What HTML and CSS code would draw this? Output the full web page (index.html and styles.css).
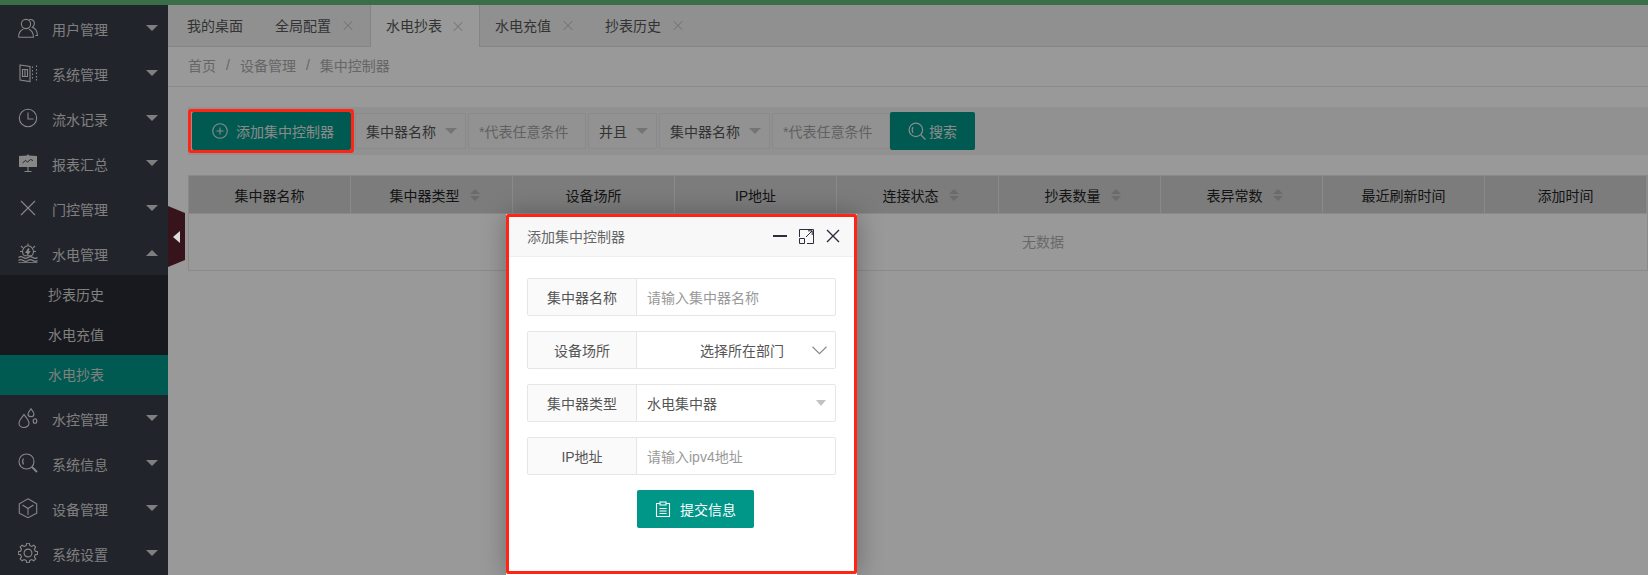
FILE: index.html
```html
<!DOCTYPE html>
<html lang="zh-CN">
<head>
<meta charset="utf-8">
<title>集中控制器</title>
<link rel="stylesheet" href="styles.css">
</head>
<body>
<div class="topline"></div>
<div class="app">
  <aside class="side">
    <a class="item"><svg class="ico" viewBox="0 0 20 20"><circle cx="8" cy="6" r="4.6"/><path d="M.6 19.3c0-5 2.6-7.2 4.6-8M10.800 11.300c2 .8 4.600 3 4.600 8H.6"/><path d="M11 1.800c3-1.200 5.700 1 5.400 4-.1 1.400-1 2.700-2 3.400 2.600 1 5 3.600 5 8.300h-2"/></svg><span class="lbl">用户管理</span><i class="arr"></i></a>
    <a class="item"><svg class="ico" viewBox="0 0 20 20"><path d="M2 2l10 1.500v15L2 17z"/><path d="M4.500 6.500h5v7h-5zM7 6.500v7"/><path d="M14.500 3.500v1.500M14.500 7v1.500M14.500 10.500V12M14.500 14v1.500M18.500 2.500V4M18.500 6v1.500M18.500 9.500V11M18.500 13v1.500M18.500 16v1.500"/></svg><span class="lbl">系统管理</span><i class="arr"></i></a>
    <a class="item"><svg class="ico" viewBox="0 0 20 20"><circle cx="10" cy="10" r="8.700"/><path d="M10 4.500V11H15.500"/></svg><span class="lbl">流水记录</span><i class="arr"></i></a>
    <a class="item"><svg class="ico" viewBox="0 0 20 20"><path class="solid" d="M1 3l8-.6L10 1l1 1.400L19 3v11H1z"/><path class="cut" d="M4.500 10l3-2.500 2 1.500 3-2.500 2.500 1"/><path d="M10 14v4.500M6.500 18.500h7"/></svg><span class="lbl">报表汇总</span><i class="arr"></i></a>
    <a class="item"><svg class="ico" viewBox="0 0 20 20"><path d="M3 3l14 14M17 3L3 17"/></svg><span class="lbl">门控管理</span><i class="arr"></i></a>
    <a class="item"><svg class="ico" viewBox="0 0 20 20"><path d="M4.500 8.500c0-3 2.500-5.700 5.500-5.700s5.500 2.700 5.500 5.700c0 1.700-.7 3.200-1.800 4.200H6.300c-1.100-1-1.800-2.500-1.800-4.200z"/><path d="M10 .5v2.300M3 3l1.800 1.800M17 3l-1.800 1.800M2 8.500h2.500M15.500 8.500H18"/><path class="thick" d="M11 5.500L8.700 9H11l-1.700 2.500"/><path d="M.5 14.500c1.600-1.200 3-1.200 4.700 0s3.100 1.200 4.800 0 3.100-1.200 4.800 0 3.100 1.200 4.700 0M.5 17.500c1.600-1.200 3-1.200 4.700 0s3.100 1.200 4.800 0 3.100-1.200 4.800 0 3.100 1.200 4.700 0M.5 19.700h19"/></svg><span class="lbl">水电管理</span><i class="arr up"></i></a>
    <div class="sub">
      <a class="subitem">抄表历史</a>
      <a class="subitem">水电充值</a>
      <a class="subitem on">水电抄表</a>
    </div>
    <a class="item"><svg class="ico" viewBox="0 0 20 20"><path d="M6 6.500c-2.200 3.300-5 5.700-5 8.700 0 2.500 2.200 4.300 5 4.300s5-1.800 5-4.300c0-3-2.800-5.400-5-8.700z"/><path d="M13 .8c-1.300 2.100-3 3.500-3 5.300 0 1.500 1.300 2.700 3 2.700s3-1.200 3-2.700c0-1.800-1.700-3.200-3-5.300z"/><ellipse cx="17" cy="13" rx="1.800" ry="2.300"/></svg><span class="lbl">水控管理</span><i class="arr"></i></a>
    <a class="item"><svg class="ico" viewBox="0 0 20 20"><circle cx="8.500" cy="8.500" r="7.500"/><path class="thick" d="M14 14l5 5"/><path d="M5.500 5.500c-1.200 1.800-1.200 4 0 6"/></svg><span class="lbl">系统信息</span><i class="arr"></i></a>
    <a class="item"><svg class="ico" viewBox="0 0 20 20"><path d="M10 .8l8.700 5v9.400L10 19.700l-8.700-4.500V5.800z"/><path d="M4.500 7l5.500 3.500L15.500 7M10 10.500V17"/></svg><span class="lbl">设备管理</span><i class="arr"></i></a>
    <a class="item"><svg class="ico" viewBox="0 0 20 20"><path d="M8.160 2.630L8.640.3h2.720l.48 2.330 1.910.86 2-1.320 1.920 1.930-1.320 1.990.86 2.070 2.330.48v2.720l-2.330.48-.86 2.070 1.320 1.990-1.930 1.930-1.990-1.320-2.070.86-.48 2.330H8.640l-.48-2.330-2.070-.86-1.990 1.320-1.930-1.930 1.320-1.990-.86-2.070-2.330-.48V8.640l2.330-.48.86-2.070-1.320-1.990L4.100 2.170l1.990 1.320z"/><circle cx="10" cy="10" r="3.900"/></svg><span class="lbl">系统设置</span><i class="arr"></i></a>
  </aside>
  <main class="main">
    <nav class="tabs">
      <span class="tab first">我的桌面</span>
      <span class="tab">全局配置<i class="x"></i></span>
      <span class="tab active">水电抄表<i class="x"></i></span>
      <span class="tab">水电充值<i class="x"></i></span>
      <span class="tab">抄表历史<i class="x"></i></span>
    </nav>
    <div class="crumb"><span>首页</span><b>/</b><span>设备管理</span><b>/</b><span>集中控制器</span></div>
    <section class="content">
      <div class="band">
        <button class="btn add"><svg class="bico" viewBox="0 0 16 16"><circle cx="8" cy="8" r="7.300"/><path d="M8 4.500v7M4.500 8h7"/></svg>添加集中控制器</button>
        <div class="field sel w110">集中器名称<i class="tri"></i></div>
        <div class="field ph w118">*代表任意条件</div>
        <div class="field sel w69">并且<i class="tri"></i></div>
        <div class="field sel w110">集中器名称<i class="tri"></i></div>
        <div class="field ph w118">*代表任意条件</div>
        <button class="btn search"><svg class="bico big" viewBox="0 0 16 16"><circle cx="7" cy="7" r="6"/><path d="M11.500 11.500l4 4"/><path d="M4.500 4.500c-1 1.400-1 3.200 0 5"/></svg>搜索</button>
      </div>
      <div class="grid">
        <div class="th">集中器名称</div>
        <div class="th sortable">集中器类型<i class="sort"></i></div>
        <div class="th">设备场所</div>
        <div class="th">IP地址</div>
        <div class="th sortable">连接状态<i class="sort"></i></div>
        <div class="th sortable">抄表数量<i class="sort"></i></div>
        <div class="th sortable">表异常数<i class="sort"></i></div>
        <div class="th">最近刷新时间</div>
        <div class="th">添加时间</div>
        <div class="empty">无数据</div>
      </div>
    </section>
  </main>
</div>
<div class="shade"></div>
<div class="handle"><i></i></div>
<div class="mark"></div>
<div class="dialog">
  <div class="dtitle">
    <span>添加集中控制器</span>
    <div class="dtools">
      <svg class="dmin" viewBox="0 0 14 14"><path d="M0 7h14"/></svg>
      <svg class="dmax" viewBox="0 0 15 15"><path d="M.5 8V.5h14v14H8"/><path d="M.5 9.500h5v5h-5zM7 8l6-6M9 1.800h4.200V6"/></svg>
      <svg class="dclose" viewBox="0 0 14 14"><path d="M1 1l12 12M13 1L1 13"/></svg>
    </div>
  </div>
  <form class="dform">
    <div class="row"><label>集中器名称</label><div class="val ph">请输入集中器名称</div></div>
    <div class="row"><label>设备场所</label><div class="val center">选择所在部门<svg class="chev" viewBox="0 0 14 8"><path d="M.5.500L7 7l6.500-6.500"/></svg></div></div>
    <div class="row"><label>集中器类型</label><div class="val">水电集中器<i class="tri lite"></i></div></div>
    <div class="row"><label>IP地址</label><div class="val ph">请输入ipv4地址</div></div>
    <button class="submit" type="button"><svg class="bico clip" viewBox="0 0 16 16"><path d="M5 2.500H1.500v13h13v-13H11"/><path d="M5 1h6v3H5zM4.500 7.500h7M4.500 10h7M4.500 12.500h7"/></svg>提交信息</button>
  </form>
  <div class="mark2"></div>
</div>
</body>
</html>
```
FILE: styles.css
```css
* { box-sizing: border-box; }
html, body { margin: 0; height: 575px; overflow: hidden; }
body {
  font-family: "Liberation Sans", "Noto Sans CJK SC", sans-serif;
  font-size: 14px;
  color: #333;
  background: #fff;
}
i { font-style: normal; display: block; }

.topline { height: 5px; background: #5fb878; }
.app { display: flex; height: 570px; }

/* sidebar */
.side { width: 168px; flex: none; background: #393d49; color: #d4d4d4; }
.item { display: flex; align-items: center; height: 45px; padding: 0 10px 0 18px; }
.ico { width: 20px; height: 20px; flex: none; fill: none; stroke: #e2e2e2; stroke-width: 1.1; }
.ico .solid { fill: #e2e2e2; stroke: none; }
.ico .cut { stroke: #393d49; stroke-width: 1; }
.ico .thick { stroke-width: 1.8; }
.lbl { margin-left: 14px; padding-top: 5px; line-height: 20px; }
.arr {
  margin-left: auto; width: 0; height: 0; margin-top: 1px;
  border-left: 6px solid transparent; border-right: 6px solid transparent;
  border-top: 6px solid #d4d4d4;
}
.arr.up { border-top: 0; border-bottom: 6px solid #d4d4d4; }
.sub { background: #282b33; }
.subitem { display: block; height: 40px; line-height: 40px; padding-left: 48px; }
.subitem.on { background: #009688; }

/* main */
.main { flex: 1; min-width: 0; display: flex; flex-direction: column; }
.tabs { display: flex; height: 42px; flex: none; background: #f0f0f0; border-bottom: 1px solid #ddd; padding-left: 4px; color: #555; }
.tab { display: flex; align-items: center; flex: none; width: 110px; height: 41px; padding: 0 0 2px 14px; border: solid transparent; border-width: 0 1px; white-space: nowrap; }
.tab.first { width: 88px; }
.tab.active { background: #fff; border-color: #ddd; height: 42px; margin-bottom: -1px; padding-left: 15px; }
.x { position: relative; flex: none; width: 10px; height: 10px; margin: 2px 0 0 12px; }
.x::before, .x::after { content: ""; position: absolute; left: -1px; top: 4.500px; width: 12px; height: 1px; background: #c4c4c4; transform: rotate(45deg); }
.x::after { transform: rotate(-45deg); }
.tab.active .x { margin-left: 11px; }

.crumb { display: flex; align-items: center; height: 40px; flex: none; padding: 0 0 3px 20px; border-bottom: 1px solid #e6e6e6; color: #aaa; }
.crumb b { font-weight: 400; margin: 0 10px; }

.content { padding: 20px 0 0 20px; }
.band { display: flex; align-items: center; gap: 2px; height: 48px; padding-left: 4px; background: #f2f2f2; }
.btn { display: flex; align-items: center; justify-content: center; height: 38px; border: 0; border-radius: 2px; background: #009688; color: #e6e6e6; font: inherit; }
.add { width: 159px; margin-right: 2px; padding: 0 0 0 3px; }
.search { width: 85px; margin-left: -2px; padding: 0; }
.bico { width: 16px; height: 16px; flex: none; fill: none; stroke: #e6e6e6; stroke-width: 1.1; margin-right: 8px; }
.bico.big { width: 18px; height: 18px; margin-right: 3px; }
.field { display: flex; align-items: center; height: 36px; padding: 0 10px; border: 1px solid #e6e6e6; border-radius: 2px; background: #f4f4f4; color: #555; white-space: nowrap; }
.field.sel { padding: 0 8px 0 10px; }
.field.ph { color: #a2a2a2; }
.w110 { width: 111px; }
.w118 { width: 118px; }
.w69 { width: 69px; }
.tri { margin-left: auto; width: 0; height: 0; border-left: 6px solid transparent; border-right: 6px solid transparent; border-top: 6px solid #c2c2c2; }
.tri.lite { border-left-width: 5.500px; border-right-width: 5.500px; margin-right: 1px; }

.grid { display: grid; grid-template-columns: repeat(9, 162px); width: 1460px; margin-top: 20px; border: 1px solid #e6e6e6; color: #222; }
.th { display: flex; align-items: center; justify-content: center; gap: 10px; height: 38px; background: #cfcfcf; border-right: 1px solid #e6e6e6; border-bottom: 1px solid #e6e6e6; }
.th.sortable { padding-left: 6px; }
.sort { position: relative; flex: none; width: 10px; height: 12px; }
.sort::before, .sort::after { content: ""; position: absolute; left: 0; border-left: 5px solid transparent; border-right: 5px solid transparent; }
.sort::before { top: 0; border-bottom: 5px solid #b2b2b2; }
.sort::after { bottom: 0; border-top: 5px solid #b2b2b2; }
.empty { grid-column: 1 / -1; height: 56px; padding-left: 250px; line-height: 56px; text-align: center; color: #b0b0b0; }

/* overlays */
.shade { position: absolute; inset: 0; background: rgba(0, 0, 0, .4); }
.handle {
  position: absolute; left: 168px; top: 206px; width: 17px; height: 61px; background: #37141c;
  clip-path: polygon(0 0, 100% 7px, 100% 54px, 0 100%);
  display: flex; align-items: center; padding-left: 5px;
}
.handle i { width: 0; height: 0; border-top: 6.500px solid transparent; border-bottom: 6.500px solid transparent; border-right: 7px solid #ddd; }
.mark { position: absolute; left: 188px; top: 109px; width: 166px; height: 44px; border: 3px solid #ff2414; border-radius: 3px; }

.dialog { position: absolute; left: 506px; top: 214px; width: 351px; height: 361px; padding: 3px; background: #fff; box-shadow: 1px 1px 24px rgba(0, 0, 0, .3); }
.mark2 { position: absolute; left: 0; top: 0; right: 0; bottom: 1px; border: 3px solid #ff2414; border-radius: 2px; }
.dtitle { display: flex; align-items: center; justify-content: space-between; height: 40px; padding: 0 14px 1px 18px; background: #f8f8f8; border-bottom: 1px solid #eee; color: #666; }
.dtools { display: flex; align-items: center; gap: 12px; }
.dtools svg { fill: none; stroke: #2e2d3c; }
.dmin { width: 14px; height: 14px; stroke-width: 2; }
.dmax { width: 15px; height: 15px; stroke-width: 1; }
.dclose { width: 14px; height: 14px; stroke-width: 1.400; }
.dform { display: flex; flex-direction: column; gap: 15px; padding: 21px 18px 0; }
.row { display: flex; height: 38px; border: 1px solid #e6e6e6; border-radius: 2px; }
.row label { display: flex; align-items: center; justify-content: center; width: 109px; flex: none; background: #fafafa; border-right: 1px solid #e6e6e6; color: #555; }
.val { flex: 1; display: flex; align-items: center; padding: 0 8px 0 10px; color: #555; }
.val.ph { color: #999; }
.val.center { padding-left: 63px; }
.chev { width: 15px; height: 9px; margin-left: auto; fill: none; stroke: #888; }
.submit { display: flex; align-items: center; justify-content: center; align-self: flex-start; width: 117px; height: 38px; margin-left: 110px; border: 0; border-radius: 2px; background: #009688; color: #fff; font: inherit; }
.bico.clip { stroke: #fff; margin-right: 9px; }
```
